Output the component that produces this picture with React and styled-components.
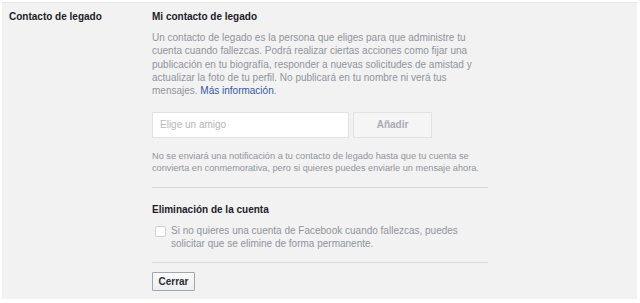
import React from "react";
import styled, { createGlobalStyle } from "styled-components";

const Global = createGlobalStyle`
  html, body { margin: 0; padding: 0; background: #ffffff; }
  body { font-family: "Liberation Sans", Arial, Helvetica, sans-serif; -webkit-font-smoothing: antialiased; }
`;

const Panel = styled.section`
  margin: 2px 3px 4px 2px;
  width: 635px;
  box-sizing: border-box;
  background: #f2f2f2;
  border-top: 1px solid #e7e7e7;
  padding: 7px 0 8px 7px;
  display: flex;
`;

const Label = styled.div`
  width: 143px;
  flex: none;
  font-size: 10px;
  line-height: 13px;
  font-weight: bold;
  color: #1d2129;
`;

const Column = styled.div`
  width: 336px;
  display: flex;
  flex-direction: column;
`;

const Heading = styled.h3`
  margin: ${(p) => p.$top || 0}px 0 0 0;
  font-size: 10px;
  line-height: 13px;
  font-weight: bold;
  color: #1d2129;
`;

const Text = styled.p`
  margin: 8px 0 0 0;
  width: 340px;
  font-size: 10px;
  line-height: 13.33px;
  color: #90949c;
`;

const Link = styled.a`
  color: #365899;
  text-decoration: none;
`;

const InputRow = styled.div`
  margin-top: 14px;
  display: flex;
  gap: 4px;
`;

const FriendInput = styled.input`
  width: 197px;
  height: 26px;
  box-sizing: border-box;
  border: 1px solid #e2e2e2;
  background: #fff;
  padding: 0 7px;
  font-family: inherit;
  font-size: 10px;
  color: #1d2129;
  outline: none;
  &::placeholder { color: #b4b7bc; }
`;

const AddButton = styled.button`
  width: 79px;
  height: 26px;
  box-sizing: border-box;
  border: 1px solid #e2e2e2;
  background: #f5f5f5;
  font-family: inherit;
  font-size: 10px;
  font-weight: bold;
  color: #a9acb1;
  padding: 0;
`;

const Note = styled.p`
  margin: 12px 0 0 0;
  font-size: 9.2px;
  line-height: 12.7px;
  color: #90949c;
`;

const Divider = styled.hr`
  margin: ${(p) => p.$top}px 0 0 0;
  border: 0;
  height: 1px;
  background: #d9d9d9;
`;

const CheckRow = styled.label`
  margin-top: 9px;
  display: flex;
  align-items: flex-start;
  gap: 5px;
`;

const Box = styled.span`
  flex: none;
  width: 11px;
  height: 11px;
  box-sizing: border-box;
  margin: 1px 0 0 3px;
  border: 1px solid #cfd1d5;
  border-radius: 2px;
  background: #fff;
`;

const CheckText = styled.span`
  font-size: 10px;
  line-height: 12.5px;
  color: #90949c;
`;

const CloseButton = styled.button`
  margin-top: 9px;
  align-self: flex-start;
  width: 43px;
  height: 19px;
  box-sizing: border-box;
  border: 1px solid #a4a6ab;
  border-radius: 1px;
  background: linear-gradient(#fbfbfb, #eceef1);
  font-family: inherit;
  font-size: 10px;
  font-weight: bold;
  color: #2a2e35;
  padding: 0;
`;

export default function App() {
  return (
    <>
      <Global />
      <Panel>
        <Label>Contacto de legado</Label>
        <Column>
          <Heading>Mi contacto de legado</Heading>
          <Text>
            Un contacto de legado es la persona que eliges para que administre tu cuenta cuando
            fallezcas. Podrá realizar ciertas acciones como fijar una publicación en tu biografía,
            responder a nuevas solicitudes de amistad y actualizar la foto de tu perfil. No
            publicará en tu nombre ni verá tus mensajes. <Link href="#">Más información</Link>.
          </Text>
          <InputRow>
            <FriendInput placeholder="Elige un amigo" />
            <AddButton>Añadir</AddButton>
          </InputRow>
          <Note>
            No se enviará una notificación a tu contacto de legado hasta que tu cuenta se
            convierta en conmemorativa, pero si quieres puedes enviarle un mensaje ahora.
          </Note>
          <Divider $top={12} />
          <Heading $top={15}>Eliminación de la cuenta</Heading>
          <CheckRow>
            <Box />
            <CheckText>
              Si no quieres una cuenta de Facebook cuando fallezcas, puedes solicitar que se
              elimine de forma permanente.
            </CheckText>
          </CheckRow>
          <Divider $top={12} />
          <CloseButton>Cerrar</CloseButton>
        </Column>
      </Panel>
    </>
  );
}
